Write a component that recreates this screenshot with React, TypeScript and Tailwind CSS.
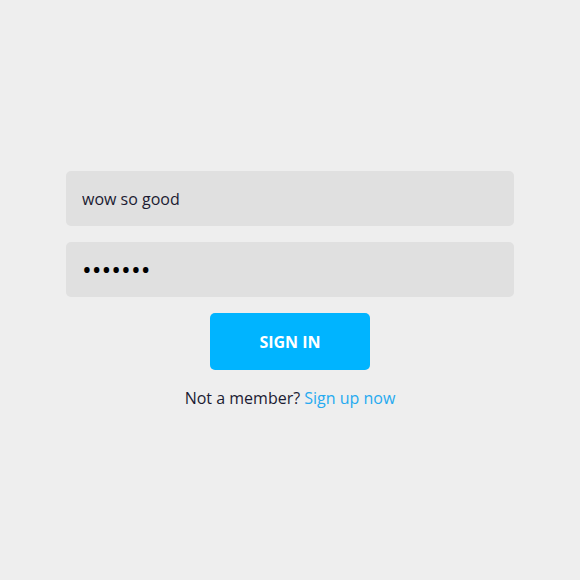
import { useState } from "react";

export default function App() {
  const [user, setUser] = useState("wow so good");
  const [pass, setPass] = useState("1234567");

  return (
    <main
      className="min-h-screen w-full bg-[#eeeeee] flex items-center justify-center"
      style={{ fontFamily: '"Open Sans", sans-serif' }}
    >
      <form className="w-[448px] flex flex-col items-center gap-4" onSubmit={(e) => e.preventDefault()}>
        <input
          type="text"
          value={user}
          onChange={(e) => setUser(e.target.value)}
          className="w-full h-[55px] rounded-[5px] bg-[#e0e0e0] px-4 pt-[2px] text-base text-[#1b1b32] outline-none"
        />
        <input
          type="password"
          value={pass}
          onChange={(e) => setPass(e.target.value)}
          className="w-full h-[55px] rounded-[5px] bg-[#e0e0e0] px-4 text-[26px] text-black outline-none"
        />
        <button
          type="submit"
          className="w-40 h-[57px] rounded-[5px] bg-[#00b4ff] pt-[2px] text-white font-bold text-base"
        >
          SIGN IN
        </button>
        <p className="text-base leading-6 text-[#1b1b32]">
          Not a member? <a href="#" className="text-[#26aaf0]">Sign up now</a>
        </p>
      </form>
    </main>
  );
}
